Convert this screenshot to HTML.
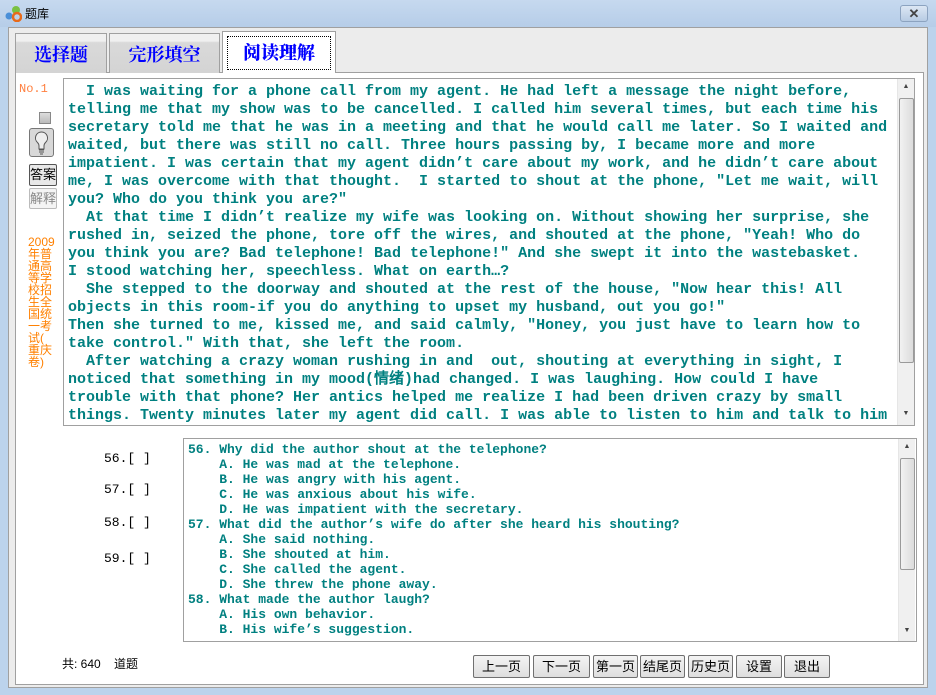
<!DOCTYPE html>
<html><head><meta charset="utf-8"><style>
*{margin:0;padding:0;box-sizing:border-box}
body{width:936px;height:695px;overflow:hidden;background:#bcd3ec;font-family:"Liberation Sans","Noto Sans CJK SC",sans-serif;position:relative}
.title{position:absolute;left:0;top:0;width:936px;height:27px;background:linear-gradient(#c6d9ef,#b6cde8);}
.title span{position:absolute;left:25px;top:5px;font-size:12px;color:#000}
.close{position:absolute;left:900px;top:5px;width:28px;height:17px;border:1px solid #8ca3c0;border-radius:3px;background:linear-gradient(#dce7f4,#b7cbe3);font-size:13px;text-align:center;line-height:15px;color:#444;font-weight:bold}
.client{position:absolute;left:8px;top:27px;width:920px;height:661px;background:#ececec;border:1px solid #a0a0a0}
.panel{position:absolute;left:15px;top:72px;width:909px;height:613px;background:#fff;border:1px solid #a0a0a0}
.tab{position:absolute;top:33px;height:40px;border:1px solid #a0a0a0;border-bottom:none;background:linear-gradient(#f0f0f0 0,#f0f0f0 18%,#d9d9d9 22%,#d4d4d4);color:#0000ff;font-family:"Noto Serif CJK SC",serif;font-weight:bold;font-size:18px;text-align:center;line-height:40px}
.tab.on{top:31px;height:42px;background:#fff;z-index:2}
.tab.on i{position:absolute;left:4px;top:4px;right:4px;bottom:3px;border:1px dotted #000;background:#fff}
.tab.on b{position:relative}
.txt{position:absolute;left:63px;top:78px;width:852px;height:348px;border:1px solid #a0a0a0;background:#fff;overflow:hidden}
pre{font-family:"Liberation Mono",monospace;font-weight:bold;color:#008080;white-space:pre}
.txt pre{position:absolute;left:4px;top:4px;font-size:15px;line-height:18px}
.sb{position:absolute;width:17px;background:#f0f0f0;border-left:1px solid #e6e6e6}
.thumb{position:absolute;left:1px;width:15px;border:1px solid #9a9a9a;border-radius:2px;background:linear-gradient(90deg,#f2f2f2,#dcdcdc)}
.arr{position:absolute;left:0;width:16px;text-align:center;font-size:7px;color:#444}
.q{position:absolute;left:183px;top:438px;width:734px;height:204px;border:1px solid #a0a0a0;background:#fff;overflow:hidden}
.q pre{position:absolute;left:4px;top:3px;font-size:13px;line-height:15px}
.lbl{position:absolute;font-size:13px;color:#000;font-family:"Liberation Mono",monospace}
.btn{position:absolute;top:655px;height:23px;border:1px solid #707070;border-radius:2px;background:linear-gradient(#f4f4f4,#dedede);font-size:13px;text-align:center;line-height:21px;color:#000}
</style></head><body>
<div class="title"><svg style="position:absolute;left:4px;top:5px" width="18" height="17"><circle cx="12" cy="5" r="4" fill="#7ac142"/><circle cx="5" cy="11" r="3.5" fill="#4a8fd8"/><circle cx="13" cy="12" r="4" fill="none" stroke="#e86a1a" stroke-width="2.5"/></svg><span>题库</span><div class="close">✕</div></div>
<div class="client"></div>
<div class="panel"></div>
<div class="tab" style="left:15px;width:92px">选择题</div>
<div class="tab" style="left:109px;width:111px">完形填空</div>
<div class="tab on" style="left:222px;width:114px"><i></i><b>阅读理解</b></div>
<div style="position:absolute;left:19px;top:82px;font-size:12px;color:#ff8040;font-family:'Liberation Mono',monospace">No.1</div>
<div style="position:absolute;left:39px;top:112px;width:12px;height:12px;border:1px solid #888;background:linear-gradient(#ddd,#bbb)"></div>
<div style="position:absolute;left:29px;top:128px;width:25px;height:29px;border:1px solid #777;border-radius:3px;background:#d8d8d8"><svg width="23" height="27"><path d="M11.5 3a6 6 0 0 0-4 10.5c1 1 1.5 2 1.5 3.5v3h5v-3c0-1.5.5-2.5 1.5-3.5a6 6 0 0 0-4-10.5z" fill="#eee" stroke="#555"/><path d="M9 21h5M9 23h5M10 25h3" stroke="#555"/></svg></div>
<div style="position:absolute;left:29px;top:164px;width:28px;height:22px;border:1px solid #555;border-radius:2px;background:#e8e8e8;font-size:13px;line-height:20px;text-align:center">答案</div>
<div style="position:absolute;left:29px;top:188px;width:28px;height:21px;border:1px solid #bbb;border-radius:2px;background:#f4f4f4;font-size:13px;line-height:19px;text-align:center;color:#888">解释</div>
<div style="position:absolute;left:28px;top:236px;font-size:12px;line-height:12px;color:#ff8000;white-space:nowrap">2009<br>年普<br>通高<br>等学<br>校招<br>生全<br>国统<br>一考<br>试(<br>重庆<br>卷)</div>
<div class="txt"><pre>  I was waiting for a phone call from my agent. He had left a message the night before,
telling me that my show was to be cancelled. I called him several times, but each time his
secretary told me that he was in a meeting and that he would call me later. So I waited and
waited, but there was still no call. Three hours passing by, I became more and more
impatient. I was certain that my agent didn’t care about my work, and he didn’t care about
me, I was overcome with that thought.  I started to shout at the phone, "Let me wait, will
you? Who do you think you are?"
  At that time I didn’t realize my wife was looking on. Without showing her surprise, she
rushed in, seized the phone, tore off the wires, and shouted at the phone, "Yeah! Who do
you think you are? Bad telephone! Bad telephone!" And she swept it into the wastebasket.
I stood watching her, speechless. What on earth…?
  She stepped to the doorway and shouted at the rest of the house, "Now hear this! All
objects in this room-if you do anything to upset my husband, out you go!"
Then she turned to me, kissed me, and said calmly, "Honey, you just have to learn how to
take control." With that, she left the room.
  After watching a crazy woman rushing in and  out, shouting at everything in sight, I
noticed that something in my mood(情绪)had changed. I was laughing. How could I have
trouble with that phone? Her antics helped me realize I had been driven crazy by small
things. Twenty minutes later my agent did call. I was able to listen to him and talk to him</pre>
<div class="sb" style="left:833px;top:0;height:346px"><div class="arr" style="top:4px">▲</div><div class="thumb" style="top:19px;height:265px"></div><div class="arr" style="top:331px">▼</div></div></div>
<div class="lbl" style="left:104px;top:451px">56.[  ]</div>
<div class="lbl" style="left:104px;top:482px">57.[  ]</div>
<div class="lbl" style="left:104px;top:515px">58.[  ]</div>
<div class="lbl" style="left:104px;top:551px">59.[  ]</div>
<div class="q"><pre>56. Why did the author shout at the telephone?
    A. He was mad at the telephone.
    B. He was angry with his agent.
    C. He was anxious about his wife.
    D. He was impatient with the secretary.
57. What did the author’s wife do after she heard his shouting?
    A. She said nothing.
    B. She shouted at him.
    C. She called the agent.
    D. She threw the phone away.
58. What made the author laugh?
    A. His own behavior.
    B. His wife’s suggestion.</pre>
<div class="sb" style="left:714px;top:0;height:202px"><div class="arr" style="top:4px">▲</div><div class="thumb" style="top:19px;height:112px"></div><div class="arr" style="top:188px">▼</div></div></div>
<div style="position:absolute;left:62px;top:655px;font-size:12px">共: 640&nbsp;&nbsp;&nbsp;&nbsp;道题</div>
<div class="btn" style="left:473px;width:57px">上一页</div>
<div class="btn" style="left:533px;width:57px">下一页</div>
<div class="btn" style="left:593px;width:45px">第一页</div>
<div class="btn" style="left:640px;width:45px">结尾页</div>
<div class="btn" style="left:688px;width:45px">历史页</div>
<div class="btn" style="left:736px;width:46px">设置</div>
<div class="btn" style="left:784px;width:46px">退出</div>
</body></html>
